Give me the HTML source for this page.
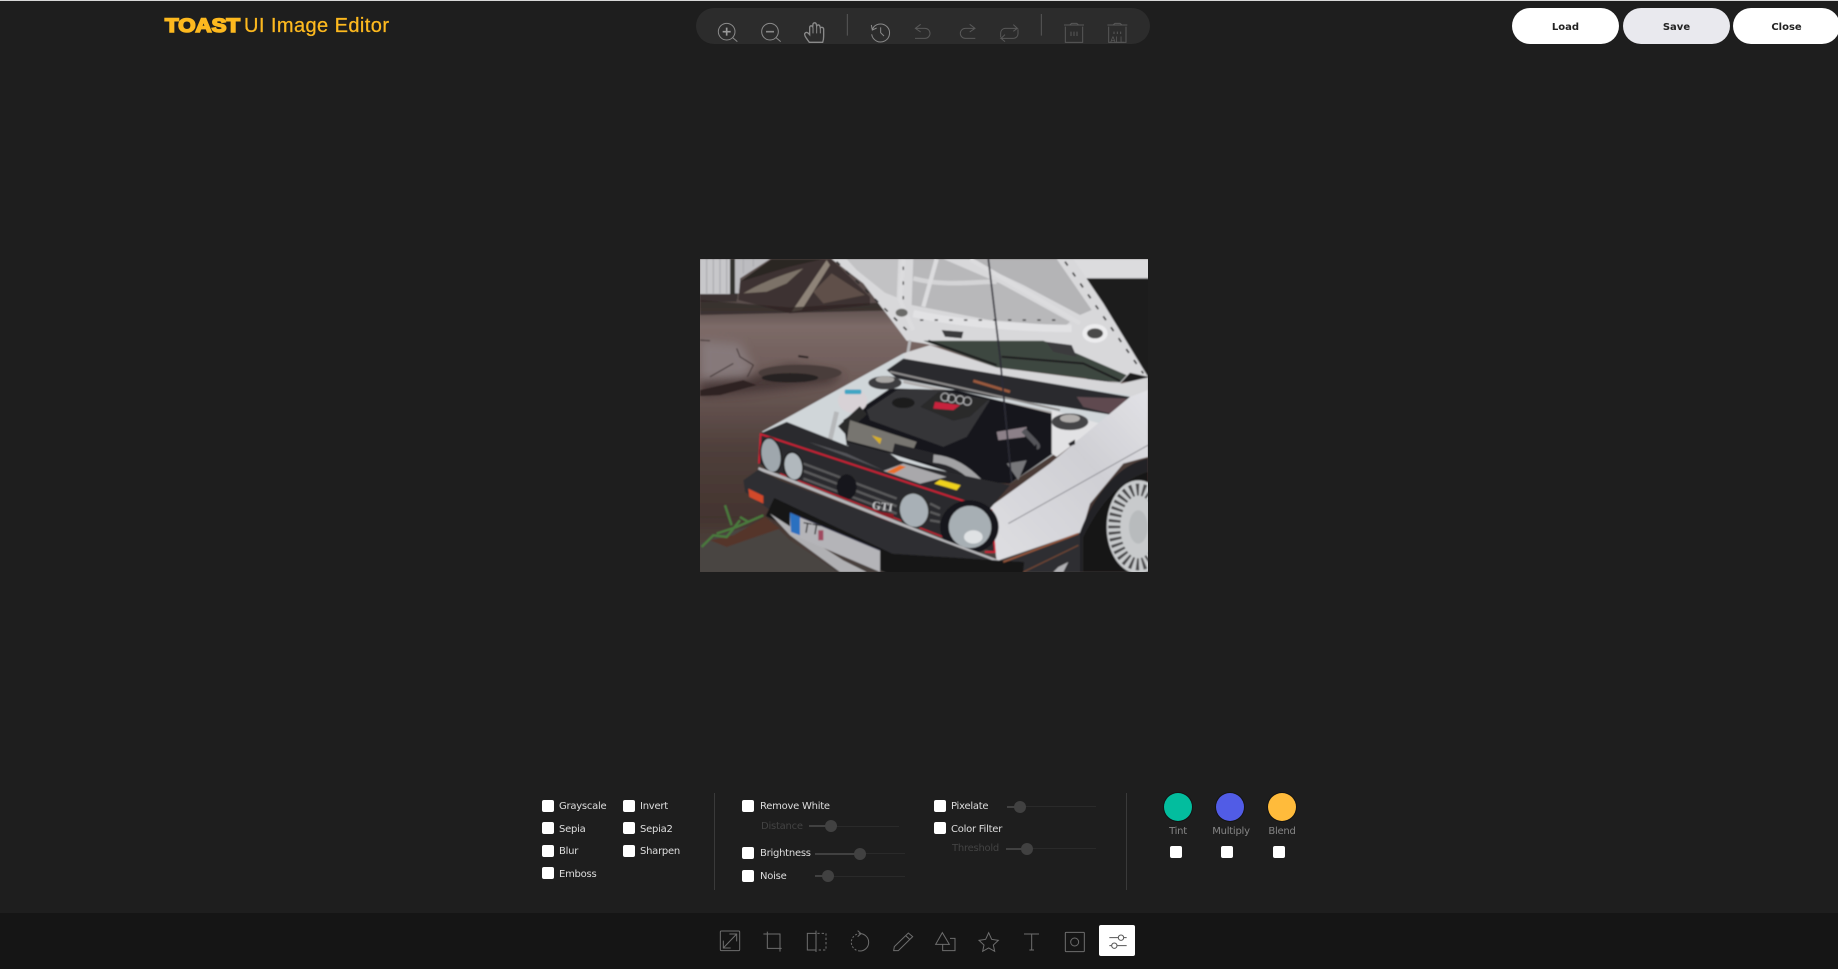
<!DOCTYPE html>
<html><head><meta charset="utf-8"><style>
html,body{margin:0;padding:0;background:#1e1e1e;width:1838px;height:969px;overflow:hidden}
body{position:relative;font-family:"DejaVu Sans","Liberation Sans",sans-serif}
.a{position:absolute}
.cb{position:absolute;width:12px;height:12px;background:#fff;border-radius:2px}
.l{position:absolute;font-size:10px;line-height:14px;color:#dedede;white-space:nowrap;margin-top:1px;letter-spacing:-.25px}
.d{color:#434343}
.c{color:#858585;transform:translateX(-50%)}
.tr{position:absolute;height:1px;background:#2a2a2a}
.fl{position:absolute;height:2px;background:#414141}
.th{position:absolute;width:12px;height:12px;border-radius:50%;background:#414141}
.dv{position:absolute;width:1px;top:793px;height:97px;background:#3a3a3a}
.btn{position:absolute;top:8px;height:36px;width:107px;border-radius:18px;background:#fff;color:#222;font-size:10px;font-weight:bold;line-height:39px;text-align:center}
.col{position:absolute;width:28px;height:28px;border-radius:50%;top:793px;box-shadow:0 0 0 1px rgba(0,0,0,.35)}
</style></head><body>
<div class="a" style="left:0;top:0;width:1838px;height:1px;background:#d8d8d8"></div>

<svg class="a" style="left:160px;top:8px" width="240" height="32">
<text x="5" y="24" font-family="Liberation Sans" font-weight="bold" font-size="19" fill="#fdb91f" stroke="#fdb91f" stroke-width="1.6" textLength="75" lengthAdjust="spacingAndGlyphs">TOAST</text>
<text x="84" y="24" font-family="Liberation Sans" font-size="20" fill="#fdb91f" stroke="#fdb91f" stroke-width=".25" textLength="145" lengthAdjust="spacing">UI Image Editor</text>
</svg>

<div class="btn" style="left:1512px">Load</div>
<div class="btn" style="left:1623px;background:#e9e9ee">Save</div>
<div class="btn" style="left:1733px">Close</div>

<svg class="a" style="left:680px;top:0" width="480" height="60" viewBox="0 0 1440 180">
<defs><clipPath id="p"><rect x="48" y="24" width="1362" height="108" rx="54"/></clipPath></defs>
<rect x="48" y="24" width="1362" height="108" rx="54" fill="#2c2c2c"/>
<g clip-path="url(#p)" fill="none" stroke-width="3">
<g stroke="#8a8a8a">
<circle cx="140" cy="95" r="25"/><path d="M158 113L172 125"/>
<path d="M128 95H152M140 83V107" stroke-width="5" stroke="#9a9a9a"/>
<circle cx="270" cy="95" r="25"/><path d="M288 113L302 125"/><path d="M258 95H282" stroke-width="5"/>
<path d="M388 127C382 118 372 108 374 101C378 94 384 98 389 104L389 82C390 76 397 76 398 82L399 72C401 67 408 67 409 73L410 78C412 73 419 74 420 80L421 84C424 80 431 82 431 88V108C431 116 430 122 428 127Z" stroke-width="4"/>
<path d="M399 82V100M410 78V100M421 84V100"/>
<path d="M577 88A27 27 0 1 1 575 103M574 75L577 90L590 84M602 82V98L612 108"/>
</g>
<g stroke="#585858">
<path d="M502 42V107M1084 42V107"/>
<path d="M706 85H735A15 15 0 0 1 735 115H705M722 73L706 85L722 96"/>
<path d="M885 85H856A15 15 0 0 0 856 115H886M869 73L885 85L869 96"/>
<path d="M975 85H1012L1000 74M1012 85L1000 94M1000 115H963L975 104M963 115L975 125M962 112V100A14 14 0 0 1 975 85M1014 88V100A14 14 0 0 1 1000 115"/>
<path d="M1152 75H1212M1170 74L1175 70H1190L1195 74M1156 80V127H1208V80M1173 95V108M1182 95V108M1191 95V108"/>
<path d="M1282 75H1342M1300 74L1305 70H1320L1325 74M1286 80V127H1338V80M1302 95V102M1312 95V102M1322 95V102"/>
</g>
<text x="1312" y="128" font-family="Liberation Sans" font-size="24" fill="#5c5c5c" text-anchor="middle" stroke="none">ALL</text>
</g>
</svg>

<!-- photo -->
<svg class="a" style="left:700px;top:259px" width="448" height="313" viewBox="30 27 1344 938" preserveAspectRatio="none">
<defs>
<clipPath id="ph"><rect x="30" y="27" width="1344" height="938"/></clipPath>
<linearGradient id="gr" x1="0" y1="0" x2="0" y2="1"><stop offset=".16" stop-color="#5c4f4d"/><stop offset=".22" stop-color="#7c6a67"/><stop offset=".4" stop-color="#6c5a57"/><stop offset=".6" stop-color="#4f3f3b"/><stop offset=".82" stop-color="#43342f"/><stop offset=".9" stop-color="#4c403b"/><stop offset="1" stop-color="#45403e"/></linearGradient>
<linearGradient id="fe" x1="0" y1="1" x2="1" y2="0"><stop offset="0" stop-color="#dedee2"/><stop offset=".6" stop-color="#cfcfd4"/><stop offset="1" stop-color="#e2e2e6"/></linearGradient>
<filter id="bl" x="-2%" y="-2%" width="104%" height="104%"><feGaussianBlur stdDeviation="2"/></filter>
<filter id="bl2" x="-20%" y="-20%" width="140%" height="140%"><feGaussianBlur stdDeviation="14"/></filter>
</defs>
<g clip-path="url(#ph)"><g filter="url(#bl)">
<rect x="20" y="17" width="1364" height="958" fill="url(#gr)"/>
<!-- ground details -->
<path d="M30 270L150 280L190 350L170 390L30 400Z" fill="#86797a" filter="url(#bl2)"/>
<path d="M30 395L170 385L300 345L460 375L420 400L250 420L150 430L30 440Z" fill="#3c2f2e" filter="url(#bl2)" opacity=".8"/>
<ellipse cx="330" cy="368" rx="125" ry="24" fill="#4a3c3b"/>
<ellipse cx="300" cy="383" rx="85" ry="14" fill="#262121"/>
<path d="M140 295L150 320L190 345L172 380M30 270L60 272M60 380L130 340" fill="none" stroke="#3a2e2e" stroke-width="3"/>
<path d="M325 318L355 322" stroke="#2a2222" stroke-width="6"/>
<path d="M30 420L160 390L200 405L90 435L30 438Z" fill="#2d2322"/>
<path d="M30 880L100 850L240 810L300 870L440 965L30 965Z" fill="#4a4542"/>
<path d="M60 870L130 855L225 800L270 835L110 890Z" fill="#553629"/>
<path d="M35 890L70 855L110 860L150 810M80 850L140 830L220 795M105 765L125 825M150 800L175 815" fill="none" stroke="#4a7a3c" stroke-width="7"/>
<!-- wall -->
<rect x="30" y="27" width="95" height="108" fill="#c7c7ca"/>
<rect x="120" y="27" width="22" height="120" fill="#33302f"/>
<path d="M135 27H240L150 85V130H135Z" fill="#bcbcc0"/>
<path d="M50 27V130M70 27V130M90 27V130M110 27V130M160 27V70M190 27V50" stroke="#adadb1" stroke-width="4" fill="none"/>
<path d="M30 132H140V155H30Z" fill="#3a3030"/>
<path d="M150 95L245 27H425L540 140L540 165L300 190L145 150Z" fill="#3d3331"/>
<path d="M160 130C210 100 270 75 340 55L290 100L230 125Z" fill="#7c7267"/>
<path d="M150 95L245 27H400L300 50Z" fill="#2a2523"/>
<path d="M305 185L410 30L420 45L335 180Z" fill="#8e8378"/>
<path d="M370 125L425 70L525 135L400 160Z" fill="#5e5048"/>
<path d="M30 150L300 172L560 158L640 180L30 195Z" fill="#2d2524" opacity=".75"/>
<!-- roof + windscreen -->
<rect x="1130" y="27" width="250" height="60" fill="#dcdcde"/>
<rect x="1190" y="85" width="190" height="310" fill="#1a1a1d"/>
<!-- bonnet -->
<path d="M425 27H1150L1240 160L1374 380L1320 368L1290 400L700 280L650 272L600 205L520 100Z" fill="#d8d8da"/>
<path d="M470 27H625L620 142L585 128L500 60Z" fill="#c2c2c4"/>
<path d="M670 27H760L930 100L1140 215L1125 228L900 210L665 165Z" fill="#b8b8ba"/>
<path d="M835 27H1100L1205 180L1170 195L1000 105Z" fill="#b4b4b6"/>
<path d="M670 85C760 110 850 95 920 95" fill="none" stroke="#d4d4d6" stroke-width="14"/>
<path d="M640 27L630 150L670 240M740 27L700 170M840 27L1170 220" fill="none" stroke="#dcdcde" stroke-width="13"/>
<path d="M670 190C800 220 1000 235 1145 235" fill="none" stroke="#e2e2e4" stroke-width="22"/>
<path d="M440 35L650 240M1125 35L1360 370" fill="none" stroke="#2a2a2c" stroke-width="5" stroke-dasharray="14 26"/>
<path d="M640 50V170M690 210H1120" fill="none" stroke="#2a2a2c" stroke-width="4" stroke-dasharray="10 34"/>
<ellipse cx="1215" cy="250" rx="38" ry="28" fill="#ececee"/><ellipse cx="1215" cy="250" rx="24" ry="15" fill="#4a4a48"/>
<ellipse cx="635" cy="188" rx="18" ry="12" fill="#6a6a68"/>
<path d="M660 270L650 330" stroke="#b8b8ba" stroke-width="9"/>
<!-- cowl -->
<path d="M700 272L1060 272L1160 310L1310 375L1290 397L920 352Z" fill="#3e4641"/>
<path d="M755 240L820 245L815 265L765 260ZM1068 275L1145 285L1160 320L1090 305Z" fill="#3a3a3c"/>
<path d="M715 272L920 345M935 320L1180 340L1290 392" fill="none" stroke="#1c1c1e" stroke-width="6"/>
<path d="M720 285L920 352L1295 400L1374 382V440L1310 445L1120 420L860 385L640 325L640 310Z" fill="#d6d6d8"/>
<!-- bay -->
<path d="M215 545L640 310L650 335L1320 435L1230 520L960 700L600 640L300 560Z" fill="#d0d6d9"/>
<path d="M590 360L640 325L1320 440L1270 495L1120 470L900 440L620 385Z" fill="#2b2b2e"/>
<path d="M600 365L1110 480" stroke="#8d8b8b" stroke-width="6"/>
<path d="M640 395L1095 490" stroke="#b0adad" stroke-width="8"/>
<path d="M850 392L960 425" stroke="#9a5a3e" stroke-width="8"/>
<path d="M1160 440L1310 445L1280 495L1180 470Z" fill="#5e4a50"/>
<path d="M460 510L600 415L800 420L1085 490L1090 610L960 700L870 695L600 610L470 585Z" fill="#18181b"/>
<path d="M1085 480L1230 520L1100 620L1085 610Z" fill="#e2e2e4"/>
<ellipse cx="1140" cy="515" rx="55" ry="25" fill="#454547"/><ellipse cx="1140" cy="505" rx="30" ry="12" fill="#b0adab"/>
<ellipse cx="585" cy="398" rx="50" ry="20" fill="#3e3e40"/><ellipse cx="585" cy="388" rx="28" ry="10" fill="#a8a6a4"/>
<path d="M530 480L620 420L745 420L900 450L830 560L760 590L540 510Z" fill="#353538"/>
<path d="M690 470L745 425L895 450L840 500L790 512Z" fill="#29292c"/>
<ellipse cx="640" cy="458" rx="34" ry="16" fill="#1c1c1e"/>
<g fill="none" stroke="#b9b9bb" stroke-width="3"><circle cx="765" cy="441" r="12"/><circle cx="785" cy="445" r="12"/><circle cx="810" cy="449" r="12"/><circle cx="832" cy="453" r="12"/></g>
<path d="M735 455L810 465L790 480L730 475Z" fill="#c8243c"/>
<ellipse cx="488" cy="452" rx="44" ry="36" fill="#d8d2d6"/><rect x="464" y="418" width="50" height="14" rx="5" fill="#41a6c4"/>
<path d="M440 485L420 570" stroke="#b6b8ba" stroke-width="14"/>
<path d="M455 540L520 480" stroke="#2a2a2c" stroke-width="32"/>
<path d="M480 510L680 575L660 620L470 570Z" fill="#77756f"/>
<path d="M470 575L600 610L640 640L480 600Z" fill="#2c2c2e"/>
<path d="M545 555L575 565L570 582Z" fill="#d8b020"/>
<path d="M610 595L730 625L850 690" fill="none" stroke="#27272a" stroke-width="32"/>
<path d="M730 625C790 630 830 660 865 695" fill="none" stroke="#a2a2a4" stroke-width="24"/>
<path d="M920 545L1010 530L1005 560L925 570Z" fill="#8c8088"/>
<path d="M950 640L985 690L1010 630Z" fill="#77777a"/>
<path d="M1000 540C1030 570 1050 590 1040 590" stroke="#55555a" stroke-width="16" fill="none"/>
<path d="M895 27L930 320L965 695" fill="none" stroke="#2c2c36" stroke-width="5"/>
<!-- fender -->
<path d="M900 770L1080 640L1320 440L1374 420V620L1300 640L1200 760L1175 845L920 932Z" fill="url(#fe)"/>
<path d="M955 820L1374 585" stroke="#8f8f95" stroke-width="3"/>
<path d="M1135 580L1155 568L1155 582L1140 588Z" fill="#26262a"/>
<!-- wheel arch + wheel -->
<path d="M1100 965V880L1165 860C1210 730 1290 640 1374 625V965Z" fill="#232325"/>
<path d="M1180 860C1230 760 1290 690 1374 665V965H1180Z" fill="#151517"/>
<ellipse cx="1345" cy="830" rx="95" ry="140" fill="#c8cacc"/>
<ellipse cx="1345" cy="830" rx="72" ry="112" fill="none" stroke="#4a4a4c" stroke-width="36" stroke-dasharray="8 10"/>
<ellipse cx="1345" cy="830" rx="28" ry="50" fill="#b8bbbd"/>
<!-- front panel top -->
<path d="M210 550L290 515L480 590L700 650L960 705L900 775Z" fill="#2a2a2d"/>
<path d="M355 575L470 610L580 660L420 600Z" fill="#55555a"/>
<path d="M580 662L640 640L770 680L690 700Z" fill="#a9a8ab"/>
<path d="M590 665L630 645L648 650L612 670Z" fill="#e8702a"/>
<path d="M733 700L750 688L812 705L800 720Z" fill="#efd21e"/>
<!-- grille -->
<path d="M210 552L905 780L915 905L760 862L280 675L205 640Z" fill="#2b2b2d"/>
<path d="M340 640L620 745M340 662L620 768M340 685L620 790M720 760L750 775M720 785L750 795M720 810L750 815" stroke="#5a5a5c" stroke-width="7" fill="none"/>
<ellipse cx="470" cy="710" rx="30" ry="38" fill="#19191b"/>
<path d="M207 640L212 552L905 780L915 905L885 905" fill="none" stroke="#d31f34" stroke-width="5"/>
<path d="M270 670L760 860" fill="none" stroke="#c31f30" stroke-width="4"/>
<text x="545" y="775" font-family="Liberation Serif" font-weight="bold" font-size="34" fill="#c8c8ca" transform="rotate(8 545 775)">GTI</text>
<rect x="556" y="782" width="56" height="24" fill="#8c1a26" transform="rotate(10 556 782)"/>
<!-- lights -->
<ellipse cx="243" cy="615" rx="33" ry="55" transform="rotate(-10 243 615)" fill="#1d1d1f"/>
<ellipse cx="243" cy="615" rx="28" ry="50" transform="rotate(-10 243 615)" fill="#9fa7ad"/>
<ellipse cx="310" cy="648" rx="31" ry="45" transform="rotate(-10 310 648)" fill="#1d1d1f"/>
<ellipse cx="310" cy="648" rx="26" ry="40" transform="rotate(-10 310 648)" fill="#b1b8bd"/>
<ellipse cx="672" cy="780" rx="48" ry="55" transform="rotate(-12 672 780)" fill="#2a2a2c"/>
<ellipse cx="672" cy="780" rx="42" ry="50" transform="rotate(-12 672 780)" fill="#a8b0b6"/>
<ellipse cx="838" cy="830" rx="88" ry="80" fill="#18181a"/>
<ellipse cx="840" cy="830" rx="64" ry="63" transform="rotate(30 840 830)" fill="#a7afb4"/>
<ellipse cx="850" cy="860" rx="28" ry="20" fill="#dfe2e4"/>
<!-- bumper -->
<path d="M205 655L280 682L760 872L930 935" fill="none" stroke="#b6b6b9" stroke-width="9"/>
<path d="M160 690L205 658L270 690L930 938L1170 850V965H600L240 780L165 725Z" fill="#2f2f31"/>
<path d="M175 715L220 737V760L178 740Z" fill="#d2482b"/>
<path d="M240 770L600 940L1000 965" fill="none" stroke="#161618" stroke-width="60"/>
<path d="M940 935L1165 850" stroke="#96563a" stroke-width="5"/>
<path d="M1000 965L1165 885" stroke="#7a4a32" stroke-width="3"/>
<path d="M240 790L460 930L530 965H450L300 855Z" fill="#b0b0b3"/>
<path d="M300 787L570 900V965L300 850Z" fill="#b4b4b8"/>
<path d="M300 787L570 900" stroke="#33334a" stroke-width="3"/>
<path d="M300 787L330 800V855L303 845Z" fill="#2a6fc0"/>
<text x="335" y="845" font-family="Liberation Sans" font-size="44" fill="#2a2a2c" transform="rotate(10 335 845)">TT</text>
<rect x="385" y="840" width="15" height="30" fill="#a04a60"/>
<path d="M1105 950L1135 935L1120 965H1090Z" fill="#b0b0b4"/>
</g></g>
</svg>

<!-- filter panel -->
<div class="cb" style="left:542px;top:800px"></div><div class="l" style="left:559px;top:799px">Grayscale</div>
<div class="cb" style="left:542px;top:822px"></div><div class="l" style="left:559px;top:822px">Sepia</div>
<div class="cb" style="left:542px;top:845px"></div><div class="l" style="left:559px;top:844px">Blur</div>
<div class="cb" style="left:542px;top:867px"></div><div class="l" style="left:559px;top:867px">Emboss</div>
<div class="cb" style="left:623px;top:800px"></div><div class="l" style="left:640px;top:799px">Invert</div>
<div class="cb" style="left:623px;top:822px"></div><div class="l" style="left:640px;top:822px">Sepia2</div>
<div class="cb" style="left:623px;top:845px"></div><div class="l" style="left:640px;top:844px">Sharpen</div>
<div class="dv" style="left:714px"></div>

<div class="cb" style="left:742px;top:800px"></div><div class="l" style="left:760px;top:799px">Remove White</div>
<div class="l d" style="left:761px;top:819px">Distance</div>
<div class="tr" style="left:809px;top:826px;width:90px"></div><div class="fl" style="left:809px;top:825px;width:21px"></div><div class="th" style="left:825px;top:820px"></div>
<div class="cb" style="left:742px;top:847px"></div><div class="l" style="left:760px;top:846px">Brightness</div>
<div class="tr" style="left:815px;top:853px;width:90px"></div><div class="fl" style="left:815px;top:853px;width:45px"></div><div class="th" style="left:854px;top:848px"></div>
<div class="cb" style="left:742px;top:870px"></div><div class="l" style="left:760px;top:869px">Noise</div>
<div class="tr" style="left:815px;top:876px;width:90px"></div><div class="fl" style="left:815px;top:875px;width:13px"></div><div class="th" style="left:822px;top:870px"></div>

<div class="cb" style="left:934px;top:800px"></div><div class="l" style="left:951px;top:799px">Pixelate</div>
<div class="tr" style="left:1007px;top:806px;width:89px"></div><div class="fl" style="left:1007px;top:806px;width:13px"></div><div class="th" style="left:1014px;top:801px"></div>
<div class="cb" style="left:934px;top:822px"></div><div class="l" style="left:951px;top:822px">Color Filter</div>
<div class="l d" style="left:952px;top:841px">Threshold</div>
<div class="tr" style="left:1006px;top:848px;width:90px"></div><div class="fl" style="left:1006px;top:848px;width:21px"></div><div class="th" style="left:1021px;top:843px"></div>
<div class="dv" style="left:1126px"></div>

<div class="col" style="left:1164px;background:#03bd9e"></div>
<div class="col" style="left:1216px;background:#515ce6"></div>
<div class="col" style="left:1268px;background:#ffbb3b"></div>
<div class="l c" style="left:1178px;top:824px">Tint</div>
<div class="l c" style="left:1231px;top:824px">Multiply</div>
<div class="l c" style="left:1282px;top:824px">Blend</div>
<div class="cb" style="left:1170px;top:846px"></div>
<div class="cb" style="left:1221px;top:846px"></div>
<div class="cb" style="left:1273px;top:846px"></div>

<!-- bottom menu -->
<div class="a" style="left:0;top:913px;width:1838px;height:56px;background:#151515"></div>
<div class="a" style="left:1099px;top:925px;width:36px;height:31px;background:#fff;border-radius:2px"></div>
<svg class="a" style="left:700px;top:910px" width="440" height="59" viewBox="0 0 1320 177">
<g fill="none" stroke="#6e6e6e" stroke-width="3">
<rect x="61" y="63" width="58" height="59" rx="3"/><path d="M70 114L110 72M88 72H110V94M70 92V114H92"/>
<path d="M202 65V115H245M190 72H240V125"/>
<path d="M348 70H322V120H348M348 62V126"/><path d="M352 70H378V120H352" stroke-dasharray="7 6"/>
<path d="M480 71A26 26 0 0 1 480 123"/><path d="M480 123A26 26 0 0 1 480 71" stroke-dasharray="6 5"/><path d="M473 62L483 71L473 80"/>
<path d="M583 110L625 69L638 80L595 122L581 122ZM617 77L630 89"/>
<path d="M727 68L707 103H748Z"/><path d="M750 85H765V122H728V104"/>
<path d="M866 68L875 88L895 91L880 105L884 124L866 114L848 124L852 105L837 91L857 88Z"/>
<path d="M972 72H1017M995 72V120M988 120H1002"/>
<rect x="1096" y="67" width="57" height="58" rx="2"/><circle cx="1124" cy="96" r="12"/>
</g>
<g fill="none" stroke="#555" stroke-width="3">
<path d="M1228 83H1254M1272 83H1280M1228 107H1234M1252 107H1280"/><circle cx="1263" cy="83" r="8"/><circle cx="1243" cy="107" r="8"/>
</g>
</svg>
</body></html>
